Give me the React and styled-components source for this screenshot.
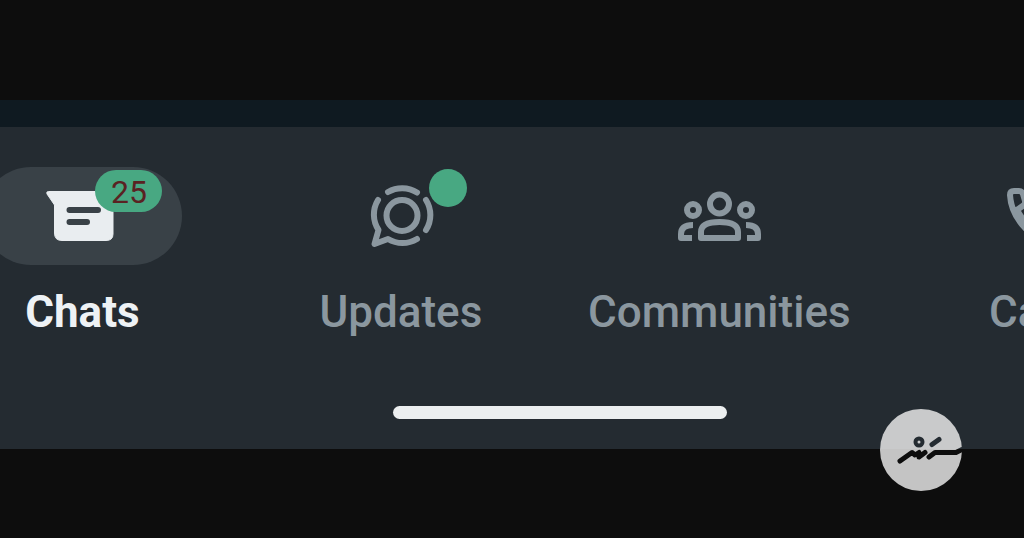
import React from 'react';
import styled, { createGlobalStyle } from 'styled-components';

const ChatsIcon = () => (
    <TabIcon viewBox="0 0 96 96" aria-hidden="true">
        <path
            d="M14.500 23.500 H74 Q79 24 79 29 V66 Q79 72.500 72 72.500 H28 Q20.500 72.500 20.500 65 V37 L13 26 Q12 23.500 14.500 23.500 Z"
            fill="#e9edf0"
            stroke="#e9edf0"
            strokeLinejoin="round"
        />
        <path d="M35.500 42 H64 M35.500 54 H53" fill="none" stroke="#394147" strokeWidth="6" strokeLinecap="round" />
    </TabIcon>
);

const UpdatesIcon = () => (
    <TabIcon viewBox="0 0 96 96" aria-hidden="true">
        <g fill="none" stroke="#8b979f" strokeWidth="6" strokeLinecap="round" strokeLinejoin="round">
            <circle cx="49" cy="47.500" r="15.500" />
            <path d="M35 24 A28 28 0 0 1 64 24.500" />
            <path d="M73 32 A28 28 0 0 1 73 62" />
            <path d="M64 71 A28 28 0 0 1 35 71 L21.500 76 L25.500 62 A28 28 0 0 1 25 32" />
        </g>
    </TabIcon>
);

const CommunitiesIcon = () => (
    <TabIcon viewBox="0 0 96 96" aria-hidden="true">
        <g fill="none" stroke="#8b979f" strokeWidth="6" strokeLinejoin="round">
            <circle cx="48.500" cy="36" r="9.500" />
            <circle cx="22" cy="42" r="6" />
            <circle cx="75" cy="42" r="6" />
            <path d="M30 70 V64 Q30 54 48.500 54 Q67 54 67 64 V70 Z" />
            <path d="M22 57 Q10 57 10 66 V70 H21" />
            <path d="M75 57 Q87 57 87 66 V70 H76" />
        </g>
    </TabIcon>
);

const CallsIcon = () => (
    <TabIcon viewBox="0 0 96 96" aria-hidden="true">
        <path
            d="M24 23 H29 Q32 23 33 26 L35 33 Q35 36 34 37 L27 42 Q36 58 50 66 L57 59 Q59 57 61 57 L71 60 Q74 61 74 64 V71 Q74 75 70 75 Q50 73 37 62 Q21 46 20 27 Q20 23 24 23 Z"
            fill="none"
            stroke="#8b979f"
            strokeWidth="6"
            strokeLinejoin="round"
        />
    </TabIcon>
);

const TABS = [
    { name: 'Chats', icon: <ChatsIcon />, count: 25, active: true },
    { name: 'Updates', icon: <UpdatesIcon />, unread: true },
    { name: 'Communities', icon: <CommunitiesIcon /> },
    { name: 'Calls', icon: <CallsIcon /> },
];

const App = () => {
    return (
        <Page>
            <GlobalStyle />
            <Screen>
                <ChatListEdge />
                <TabBar>
                    {TABS.map((tab) => (
                        <Tab key={tab.name} type="button" $active={tab.active}>
                            <IconPill $active={tab.active}>
                                {tab.icon}
                                {tab.count && <CountBadge>{tab.count}</CountBadge>}
                                {tab.unread && <DotBadge />}
                            </IconPill>
                            {tab.name}
                        </Tab>
                    ))}
                </TabBar>
                <HomeArea>
                    <HomeIndicator />
                </HomeArea>
            </Screen>

            {/* the strokes are cut out of the disc */}
            <Watermark viewBox="0 0 82 82" aria-hidden="true">
                <mask id="signature">
                    <rect width="82" height="82" fill="white" />
                    <g fill="none" stroke="black" strokeWidth="5" strokeLinecap="round" strokeLinejoin="round">
                        <circle cx="39" cy="33" r="3.500" strokeWidth="4" />
                        <path d="M20 52 L32 43.500 L35 46 L39 43.500 L39 48 L45 43.500" />
                        <path d="M52 35.500 L59 30.500" />
                        <path d="M49 48 L55 43.500 H76 L82 40.500" />
                    </g>
                </mask>
                <circle cx="41" cy="41" r="41" fill="#f2f2f2" fillOpacity="0.8" mask="url(#signature)" />
            </Watermark>
        </Page>
    );
};

export default App;

const GlobalStyle = createGlobalStyle`
* { box-sizing: border-box; }
body {
  margin: 0;
  background: #0d0d0d;
  font-family: Roboto, "Liberation Sans", sans-serif;
}
`;

const Page = styled.main`
position: relative;
min-height: 100vh;
padding: 100px 0 88px;
overflow: hidden;
`;

/* wider than the window, so the outer tabs run off both sides */
const Screen = styled.div`
width: 124.4%;
margin-left: -7.5%;
background: #242b31;
`;

const ChatListEdge = styled.div`
height: 27px;
background: #0f1a21;
`;

const TabBar = styled.nav`
display: grid;
grid-template-columns: repeat(4, 1fr);
padding-top: 40px;
`;

const Tab = styled.button`
display: flex;
flex-direction: column;
align-items: center;
gap: 21px;
padding: 0;
border: 0;
background: none;
color: ${(props) => (props.$active ? '#eef2f5' : '#8b979f')};
font-family: inherit;
font-size: 44px;
font-weight: ${(props) => (props.$active ? 700 : 500)};
line-height: 52px;
cursor: pointer;
`;

const IconPill = styled.span`
position: relative;
display: flex;
align-items: center;
justify-content: center;
width: 200px;
height: 98px;
border-radius: 49px;
background: ${(props) => (props.$active ? '#394147' : 'transparent')};
`;

const TabIcon = styled.svg`
width: 96px;
height: 96px;
`;

const CountBadge = styled.span`
position: absolute;
top: 3px;
right: 20px;
width: 67px;
height: 42px;
border-radius: 21px;
background: #48a882;
color: #5a2222;
font-size: 32px;
font-weight: 400;
line-height: 44px;
text-align: center;
`;

const DotBadge = styled.span`
position: absolute;
top: 2px;
right: 34px;
width: 38px;
height: 38px;
border-radius: 50%;
background: #48a882;
`;

const HomeArea = styled.div`
display: flex;
justify-content: center;
padding: 68px 0 30px;
`;

const HomeIndicator = styled.div`
width: 334px;
height: 13px;
border-radius: 7px;
background: #eceff0;
`;

const Watermark = styled.svg`
position: absolute;
right: 62px;
bottom: 47px;
width: 82px;
height: 82px;
`;
